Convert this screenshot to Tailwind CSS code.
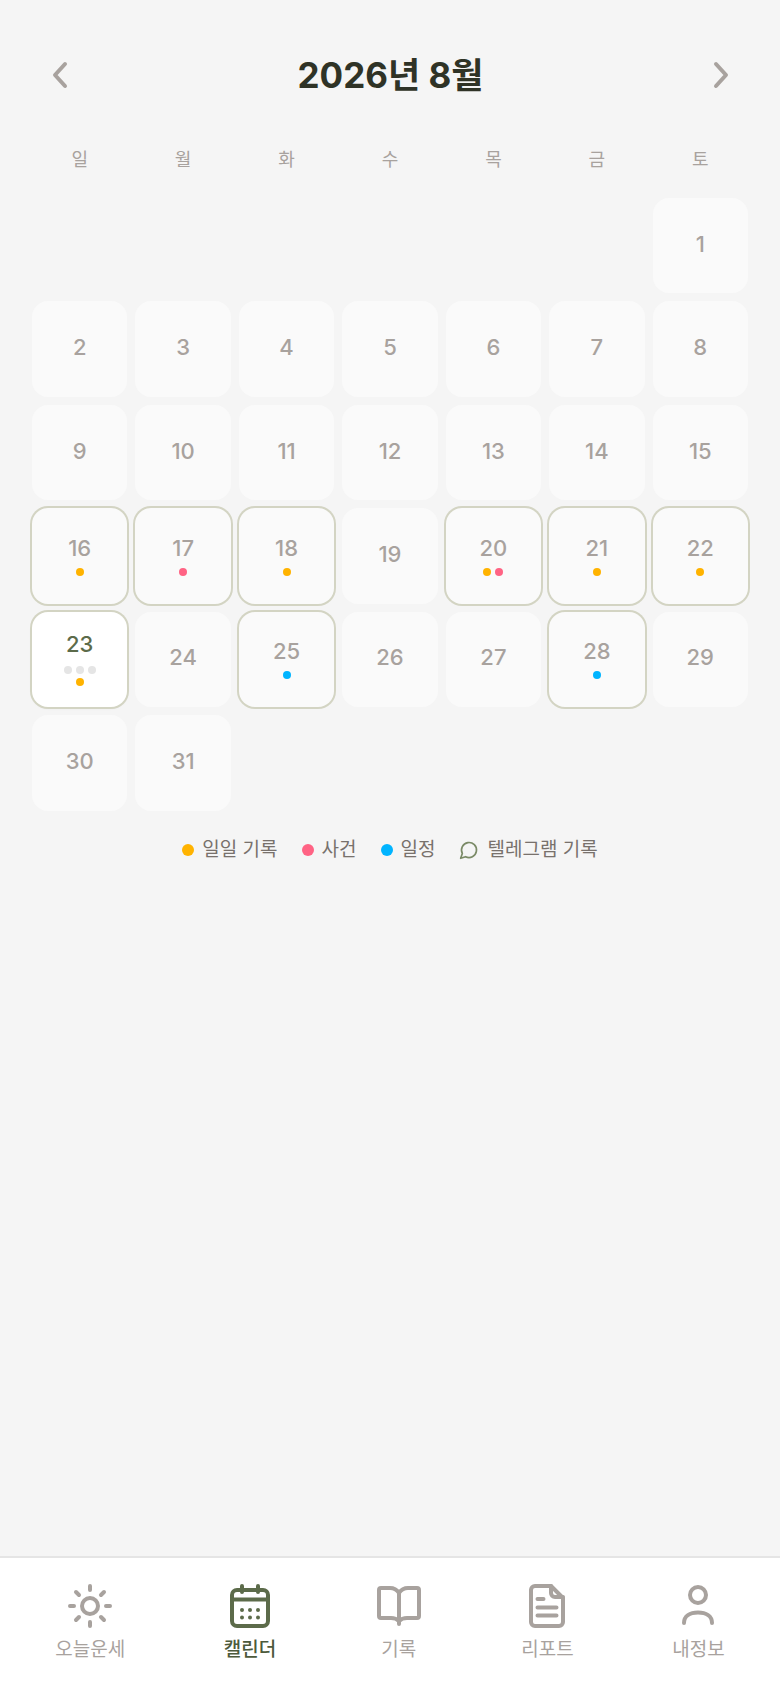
<!DOCTYPE html>
<html lang="ko">
<head>
  <meta charset="UTF-8">
  <meta name="viewport" content="width=device-width, initial-scale=1.0">
  <title>캘린더</title>
  <script src="https://cdn.jsdelivr.net/npm/@tailwindcss/browser@4"></script>
</head>
<body class="bg-[#f5f5f5] font-['Inter','Noto_Sans_CJK_KR',sans-serif]">
  <div class="h-[1688px] flex flex-col">
    <main class="flex-1 px-8 pt-[51px]">
      <!-- Month header -->
      <div class="flex items-center justify-between h-12 pl-[18px] pr-[17px]">
        <svg class="w-5 h-7 text-[#a8a29e]" viewBox="0 0 20 28" fill="none" stroke="currentColor" stroke-width="4" stroke-linecap="round" stroke-linejoin="round"><path d="M15 3 5 14l10 11"/></svg>
        <h1 class="text-[35px] font-bold text-[#2f3326]">2026년 8월</h1>
        <svg class="w-5 h-7 text-[#a8a29e]" viewBox="0 0 20 28" fill="none" stroke="currentColor" stroke-width="4" stroke-linecap="round" stroke-linejoin="round"><path d="M5 3l10 11L5 25"/></svg>
      </div>

      <!-- Weekdays -->
      <div class="grid grid-cols-7 gap-2 mt-[47px] text-center text-lg leading-7 text-[#a8a29e]">
        <div>일</div><div>월</div><div>화</div><div>수</div><div>목</div><div>금</div><div>토</div>
      </div>

      <!-- Days -->
      <div class="grid grid-cols-7 gap-2 mt-6 text-[22px] font-medium leading-7 text-[#a8a29e]">
        <div class="col-start-7 aspect-square rounded-2xl bg-[#fafafa] pb-1 flex items-center justify-center">1</div>
        <div class="aspect-square rounded-2xl bg-[#fafafa] pb-1 flex items-center justify-center">2</div>
        <div class="aspect-square rounded-2xl bg-[#fafafa] pb-1 flex items-center justify-center">3</div>
        <div class="aspect-square rounded-2xl bg-[#fafafa] pb-1 flex items-center justify-center">4</div>
        <div class="aspect-square rounded-2xl bg-[#fafafa] pb-1 flex items-center justify-center">5</div>
        <div class="aspect-square rounded-2xl bg-[#fafafa] pb-1 flex items-center justify-center">6</div>
        <div class="aspect-square rounded-2xl bg-[#fafafa] pb-1 flex items-center justify-center">7</div>
        <div class="aspect-square rounded-2xl bg-[#fafafa] pb-1 flex items-center justify-center">8</div>
        <div class="aspect-square rounded-2xl bg-[#fafafa] pb-1 flex items-center justify-center">9</div>
        <div class="aspect-square rounded-2xl bg-[#fafafa] pb-1 flex items-center justify-center">10</div>
        <div class="aspect-square rounded-2xl bg-[#fafafa] pb-1 flex items-center justify-center">11</div>
        <div class="aspect-square rounded-2xl bg-[#fafafa] pb-1 flex items-center justify-center">12</div>
        <div class="aspect-square rounded-2xl bg-[#fafafa] pb-1 flex items-center justify-center">13</div>
        <div class="aspect-square rounded-2xl bg-[#fafafa] pb-1 flex items-center justify-center">14</div>
        <div class="aspect-square rounded-2xl bg-[#fafafa] pb-1 flex items-center justify-center">15</div>
        <div class="aspect-square rounded-2xl bg-[#fafafa] pb-0.5 ring-2 ring-[#d3d4c3] flex flex-col items-center justify-center">16<div class="flex gap-1 mt-1.5"><span class="size-2 rounded-full bg-[#ffb300]"></span></div></div>
        <div class="aspect-square rounded-2xl bg-[#fafafa] pb-0.5 ring-2 ring-[#d3d4c3] flex flex-col items-center justify-center">17<div class="flex gap-1 mt-1.5"><span class="size-2 rounded-full bg-[#ff6384]"></span></div></div>
        <div class="aspect-square rounded-2xl bg-[#fafafa] pb-0.5 ring-2 ring-[#d3d4c3] flex flex-col items-center justify-center">18<div class="flex gap-1 mt-1.5"><span class="size-2 rounded-full bg-[#ffb300]"></span></div></div>
        <div class="aspect-square rounded-2xl bg-[#fafafa] pb-1 flex items-center justify-center">19</div>
        <div class="aspect-square rounded-2xl bg-[#fafafa] pb-0.5 ring-2 ring-[#d3d4c3] flex flex-col items-center justify-center">20<div class="flex gap-1 mt-1.5"><span class="size-2 rounded-full bg-[#ffb300]"></span><span class="size-2 rounded-full bg-[#ff6384]"></span></div></div>
        <div class="aspect-square rounded-2xl bg-[#fafafa] pb-0.5 ring-2 ring-[#d3d4c3] flex flex-col items-center justify-center">21<div class="flex gap-1 mt-1.5"><span class="size-2 rounded-full bg-[#ffb300]"></span></div></div>
        <div class="aspect-square rounded-2xl bg-[#fafafa] pb-0.5 ring-2 ring-[#d3d4c3] flex flex-col items-center justify-center">22<div class="flex gap-1 mt-1.5"><span class="size-2 rounded-full bg-[#ffb300]"></span></div></div>
        <div class="aspect-square rounded-2xl bg-white pb-0.5 ring-2 ring-[#d3d4c3] shadow-sm flex flex-col items-center justify-center text-[#5c6b4a]">23<div class="flex gap-1 mt-2"><span class="size-2 rounded-full bg-[#e5e5e5]"></span><span class="size-2 rounded-full bg-[#e5e5e5]"></span><span class="size-2 rounded-full bg-[#e5e5e5]"></span></div><div class="flex gap-1 mt-1"><span class="size-2 rounded-full bg-[#ffb300]"></span></div></div>
        <div class="aspect-square rounded-2xl bg-[#fafafa] pb-1 flex items-center justify-center">24</div>
        <div class="aspect-square rounded-2xl bg-[#fafafa] pb-0.5 ring-2 ring-[#d3d4c3] flex flex-col items-center justify-center">25<div class="flex gap-1 mt-1.5"><span class="size-2 rounded-full bg-[#00b4ff]"></span></div></div>
        <div class="aspect-square rounded-2xl bg-[#fafafa] pb-1 flex items-center justify-center">26</div>
        <div class="aspect-square rounded-2xl bg-[#fafafa] pb-1 flex items-center justify-center">27</div>
        <div class="aspect-square rounded-2xl bg-[#fafafa] pb-0.5 ring-2 ring-[#d3d4c3] flex flex-col items-center justify-center">28<div class="flex gap-1 mt-1.5"><span class="size-2 rounded-full bg-[#00b4ff]"></span></div></div>
        <div class="aspect-square rounded-2xl bg-[#fafafa] pb-1 flex items-center justify-center">29</div>
        <div class="aspect-square rounded-2xl bg-[#fafafa] pb-1 flex items-center justify-center">30</div>
        <div class="aspect-square rounded-2xl bg-[#fafafa] pb-1 flex items-center justify-center">31</div>
      </div>

      <!-- Legend -->
      <div class="flex items-center justify-center gap-6 mt-[27px] text-[19px] leading-6 text-[#78716c]">
        <div class="flex items-center gap-2"><span class="size-3 rounded-full bg-[#ffb300]"></span>일일 기록</div>
        <div class="flex items-center gap-2"><span class="size-3 rounded-full bg-[#ff6384]"></span>사건</div>
        <div class="flex items-center gap-2"><span class="size-3 rounded-full bg-[#00b4ff]"></span>일정</div>
        <div class="flex items-center gap-2">
          <svg class="size-5 text-[#7a8a66]" viewBox="0 0 24 24" fill="none" stroke="currentColor" stroke-width="2" stroke-linecap="round" stroke-linejoin="round"><path d="M7.9 20A9 9 0 1 0 4 16.1L2 22Z"/></svg>
          텔레그램 기록
        </div>
      </div>
    </main>

    <!-- Bottom nav -->
    <nav class="h-[132px] bg-white border-t-2 border-[#e5e5e5] flex justify-around px-1.5 pt-[26px] text-[19px] leading-6 text-[#a8a29e]">
      <a class="flex flex-col items-center gap-2.5 min-w-12">
        <svg class="size-11" viewBox="0 0 44 44" fill="none" stroke="currentColor" stroke-width="4" stroke-linecap="round"><circle cx="22" cy="22" r="8"/><path d="M22 2v4M22 38v4M2 22h4M38 22h4M8 8l3 3M33 33l3 3M8 36l3-3M33 11l3-3"/></svg>
        오늘운세
      </a>
      <a class="flex flex-col items-center gap-2.5 min-w-12 font-medium text-[#4d5a3c]">
        <svg class="size-11 text-[#5c6b4a]" viewBox="0 0 44 44" fill="none" stroke="currentColor" stroke-width="4" stroke-linecap="round"><rect x="4" y="6" width="36" height="36" rx="5"/><path d="M14 2v6M30 2v6M4 15.5h36"/><g fill="currentColor" stroke="none"><circle cx="14" cy="26" r="2"/><circle cx="22" cy="26" r="2"/><circle cx="30" cy="26" r="2"/><circle cx="14" cy="33.5" r="2"/><circle cx="22" cy="33.5" r="2"/><circle cx="30" cy="33.5" r="2"/></g></svg>
        캘린더
      </a>
      <a class="flex flex-col items-center gap-2.5 min-w-12">
        <svg class="size-11" viewBox="0 0 44 44" fill="none" stroke="currentColor" stroke-width="4" stroke-linecap="round" stroke-linejoin="round"><path d="M22 9C20 6 17 4 13 4H4a2 2 0 0 0-2 2V32a2 2 0 0 0 2 2H14C17 34 20 35 22 37C24 35 27 34 30 34H40a2 2 0 0 0 2-2V6a2 2 0 0 0-2-2H31C27 4 24 6 22 9ZM22 9V40"/></svg>
        기록
      </a>
      <a class="flex flex-col items-center gap-2.5 min-w-12">
        <svg class="size-11" viewBox="0 0 44 44" fill="none" stroke="currentColor" stroke-width="4" stroke-linecap="round" stroke-linejoin="round"><path d="M10 2H26L38 14V38a4 4 0 0 1-4 4H10a4 4 0 0 1-4-4V6a4 4 0 0 1 4-4Z"/><path d="M26 2V9a4 4 0 0 0 4 4H38M12.5 15h6M12.5 23.5h19M12.5 31.5h19"/></svg>
        리포트
      </a>
      <a class="flex flex-col items-center gap-2.5 min-w-12">
        <svg class="size-11" viewBox="0 0 44 44" fill="none" stroke="currentColor" stroke-width="4" stroke-linecap="round"><circle cx="22" cy="11" r="8"/><path d="M8 39C8 32 14 28.5 22 28.5S36 32 36 39"/></svg>
        내정보
      </a>
    </nav>
  </div>
</body>
</html>
